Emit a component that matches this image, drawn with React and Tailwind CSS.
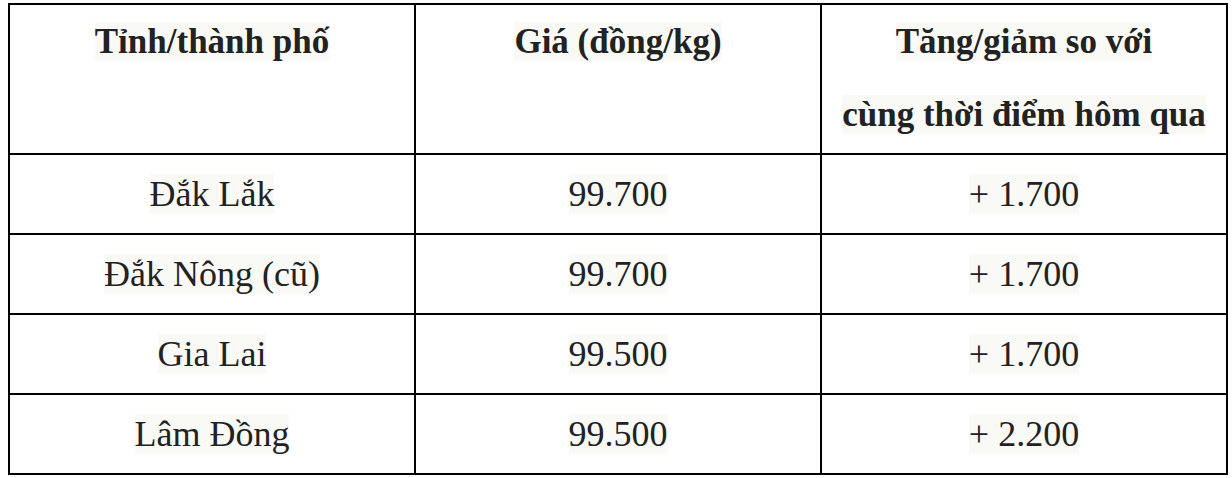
const rows = [
  { name: 'Đắk Lắk', price: '99.700', change: '+ 1.700' },
  { name: 'Đắk Nông (cũ)', price: '99.700', change: '+ 1.700' },
  { name: 'Gia Lai', price: '99.500', change: '+ 1.700' },
  { name: 'Lâm Đồng', price: '99.500', change: '+ 2.200' },
];

function Hl({ children }) {
  return <span className="bg-[#f9f9f6]">{children}</span>;
}

export default function App() {
  return (
    <div className="w-[1232px] h-[478px] bg-white pt-[3px] pl-[8px] font-['Liberation_Serif','Times_New_Roman',serif] text-[#222]">
      <table className="w-[1220px] border-collapse text-[36px] table-fixed">
        <thead>
          <tr className="h-[150px]">
            <th className="border-2 border-black align-top leading-[73px] text-[35px] font-bold text-center">
              <Hl>Tỉnh/thành phố</Hl>
            </th>
            <th className="border-2 border-black align-top leading-[73px] text-[35px] font-bold text-center">
              <Hl>Giá (đồng/kg)</Hl>
            </th>
            <th className="border-2 border-black align-top leading-[73px] text-[35px] font-bold text-center">
              <Hl>Tăng/giảm so với</Hl>
              <br />
              <Hl>cùng thời điểm hôm qua</Hl>
            </th>
          </tr>
        </thead>
        <tbody>
          {rows.map((r) => (
            <tr key={r.name} className="h-[80px]">
              <td className="border-2 border-black text-center align-middle">
                <Hl>{r.name}</Hl>
              </td>
              <td className="border-2 border-black text-center align-middle">
                <Hl>{r.price}</Hl>
              </td>
              <td className="border-2 border-black text-center align-middle">
                <Hl>{r.change}</Hl>
              </td>
            </tr>
          ))}
        </tbody>
      </table>
    </div>
  );
}
